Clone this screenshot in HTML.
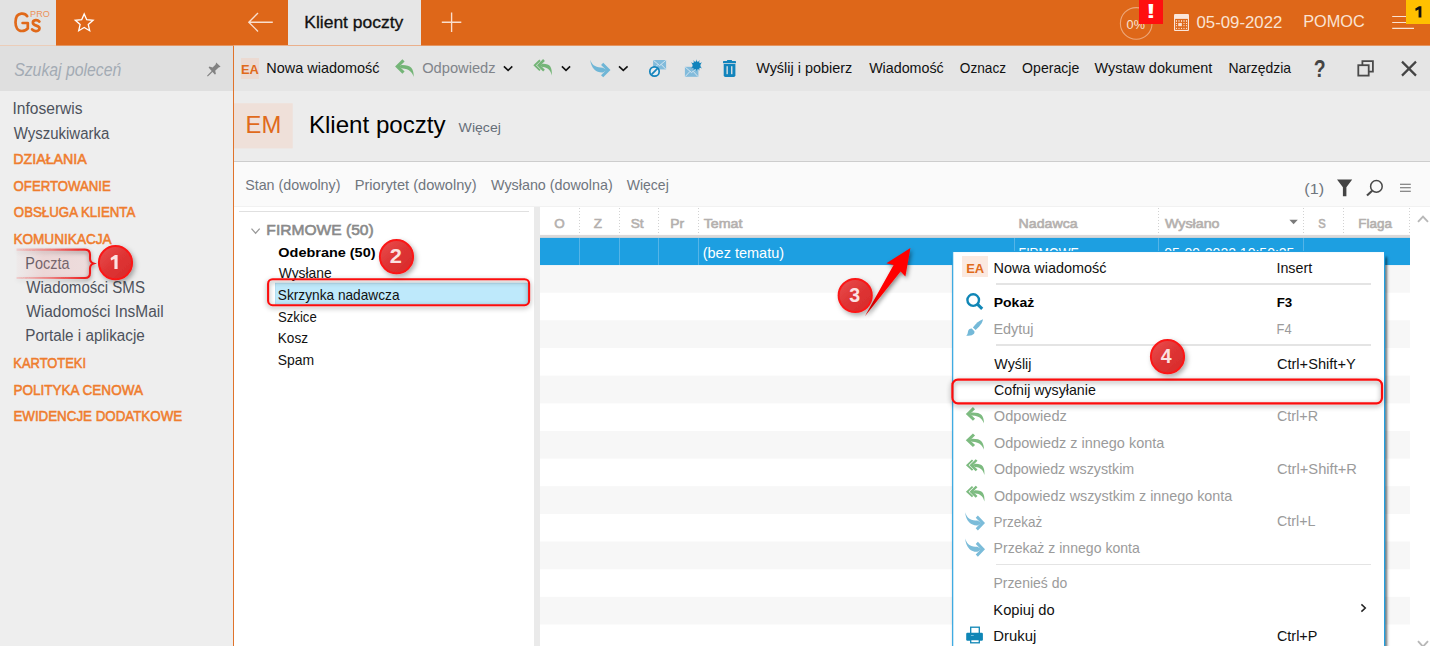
<!DOCTYPE html>
<html lang="pl">
<head>
<meta charset="utf-8">
<title>Klient poczty</title>
<style>
html,body{margin:0;padding:0;background:#fff;}
body{width:1430px;height:646px;overflow:hidden;position:relative;font-family:"Liberation Sans",sans-serif;}
#app{position:absolute;left:0;top:0;width:1430px;height:646px;overflow:hidden;background:#fff;}
.b{position:absolute;}
.t{position:absolute;white-space:nowrap;transform-origin:0 0;display:block;}
svg{position:absolute;left:0;top:0;overflow:visible;}
.row{position:absolute;left:540px;width:870px;background:#f7f7f7;}
</style>
</head>
<body>
<div id="app">

<!-- ============ top bar ============ -->
<div class="b" style="left:0;top:0;width:1430px;height:45px;background:#de6719;"></div>
<div class="b" style="left:0;top:45px;width:1430px;height:1px;background:#e39460;"></div>
<div class="b" style="left:0;top:0;width:56px;height:45px;background:#e2e2e2;"></div>
<div class="b" style="left:0;top:45px;width:56px;height:1px;background:#ebcdb9;"></div>
<div class="b" style="left:288px;top:0;width:133px;height:45px;background:#e6e6e6;"></div>
<div class="b" style="left:234px;top:45px;width:187px;height:1px;background:#eab08c;"></div>

<!-- ============ sidebar ============ -->
<div class="b" style="left:0;top:46px;width:233px;height:600px;background:#eeeeee;"></div>
<div class="b" style="left:0;top:46px;width:233px;height:45px;background:#dfdfdf;"></div>
<div class="b" style="left:233px;top:46px;width:1px;height:600px;background:#e0732b;"></div>

<!-- ============ toolbar ============ -->
<div class="b" style="left:234px;top:46px;width:1196px;height:45px;background:#e5e5e5;"></div>
<div class="b" style="left:241px;top:58px;width:18.2px;height:21px;background:#ebdad2;"></div>

<!-- ============ header ============ -->
<div class="b" style="left:234px;top:91px;width:1196px;height:70px;background:#ececec;"></div>
<div class="b" style="left:234px;top:161px;width:1196px;height:1px;background:#cdcdcd;"></div>
<svg width="1430" height="646" viewBox="0 0 1430 646"><rect x="234" y="103.2" width="58.7" height="45.2" fill="#efe0d9"/></svg>

<!-- ============ filter bar ============ -->
<div class="b" style="left:234px;top:162px;width:1196px;height:45px;background:#fafafa;"></div>
<div class="b" style="left:234px;top:206px;width:1196px;height:1px;background:#f1f1f1;"></div>

<!-- ============ tree panel ============ -->
<div class="b" style="left:239px;top:211px;width:290px;height:1px;background:#e0e0e0;"></div>
<div class="b" style="left:534px;top:207px;width:6px;height:439px;background:#eaeaea;"></div>
<svg width="1430" height="646" viewBox="0 0 1430 646"><rect x="275.4" y="283.2" width="252" height="21" fill="#bee9fb" stroke="#a9d8ee" stroke-width="0.8"/></svg>

<!-- ============ table ============ -->
<svg width="1430" height="646" viewBox="0 0 1430 646">
<rect x="540" y="265.00" width="870" height="27.75" fill="#f7f7f7"/>
<rect x="540" y="320.30" width="870" height="27.75" fill="#f7f7f7"/>
<rect x="540" y="375.60" width="870" height="27.75" fill="#f7f7f7"/>
<rect x="540" y="430.90" width="870" height="27.75" fill="#f7f7f7"/>
<rect x="540" y="486.20" width="870" height="27.75" fill="#f7f7f7"/>
<rect x="540" y="541.50" width="870" height="27.75" fill="#f7f7f7"/>
<rect x="540" y="596.80" width="870" height="27.75" fill="#f7f7f7"/>
<rect x="540" y="234.9" width="870" height="3.1" fill="#dbd9d9"/>
<rect x="540" y="237.9" width="870" height="27.15" fill="#1d9fe1"/>
</svg>
<div class="b" style="left:578.9px;top:208px;width:1px;height:27px;background:repeating-linear-gradient(to bottom,#d2d2d2 0,#d2d2d2 1px,transparent 1px,transparent 3px);"></div>
<div class="b" style="left:618.7px;top:208px;width:1px;height:27px;background:repeating-linear-gradient(to bottom,#d2d2d2 0,#d2d2d2 1px,transparent 1px,transparent 3px);"></div>
<div class="b" style="left:657.8px;top:208px;width:1px;height:27px;background:repeating-linear-gradient(to bottom,#d2d2d2 0,#d2d2d2 1px,transparent 1px,transparent 3px);"></div>
<div class="b" style="left:697.6px;top:208px;width:1px;height:27px;background:repeating-linear-gradient(to bottom,#d2d2d2 0,#d2d2d2 1px,transparent 1px,transparent 3px);"></div>
<div class="b" style="left:1157.8px;top:208px;width:1px;height:27px;background:repeating-linear-gradient(to bottom,#d2d2d2 0,#d2d2d2 1px,transparent 1px,transparent 3px);"></div>
<div class="b" style="left:1303.2px;top:208px;width:1px;height:27px;background:repeating-linear-gradient(to bottom,#d2d2d2 0,#d2d2d2 1px,transparent 1px,transparent 3px);"></div>
<div class="b" style="left:1343.0px;top:208px;width:1px;height:27px;background:repeating-linear-gradient(to bottom,#d2d2d2 0,#d2d2d2 1px,transparent 1px,transparent 3px);"></div>
<div class="b" style="left:1409.3px;top:208px;width:1px;height:27px;background:repeating-linear-gradient(to bottom,#d2d2d2 0,#d2d2d2 1px,transparent 1px,transparent 3px);"></div>

<div class="b" style="left:578.9px;top:238px;width:1px;height:26.7px;background:#55b4e7;"></div>
<div class="b" style="left:618.7px;top:238px;width:1px;height:26.7px;background:#55b4e7;"></div>
<div class="b" style="left:657.8px;top:238px;width:1px;height:26.7px;background:#55b4e7;"></div>
<div class="b" style="left:697.6px;top:238px;width:1px;height:26.7px;background:#55b4e7;"></div>
<div class="b" style="left:1157.8px;top:238px;width:1px;height:26.7px;background:#55b4e7;"></div>
<div class="b" style="left:1303.2px;top:238px;width:1px;height:26.7px;background:#55b4e7;"></div>
<div class="b" style="left:1014.0px;top:238px;width:1px;height:26.7px;background:#55b4e7;"></div>
<span class="t" style="left:304px;top:5.50px;font-size:16.8px;line-height:34px;color:#111;transform:translateX(0.29px) scaleX(1.0398);-webkit-text-stroke:0.3px;">Klient poczty</span>
<span class="t" style="left:1126px;top:13.00px;font-size:12px;line-height:24px;color:#fae3d3;transform:translateX(0.61px) scaleX(1.0548);">0%</span>
<span class="t" style="left:1196px;top:5.50px;font-size:16.5px;line-height:33px;color:#fae3d3;transform:translateX(0.45px) scaleX(1.0176);">05-09-2022</span>
<span class="t" style="left:1303px;top:4.50px;font-size:16.5px;line-height:33px;color:#fae3d3;transform:translateX(0.16px) scaleX(0.9896);">POMOC</span>
<span class="t" style="left:30px;top:6.50px;font-size:8.2px;line-height:16px;color:#ec9158;transform:translateX(0.09px) scaleX(1.1059);">PRO</span>
<span class="t" style="left:14px;top:52.50px;font-size:17.5px;line-height:35px;color:#a3abb4;transform:translateX(0.16px) scaleX(0.9030);font-style:italic;">Szukaj poleceń</span>
<span class="t" style="left:12px;top:93.00px;font-size:15.6px;line-height:31px;color:#4d525c;transform:translateX(0.48px) scaleX(0.9984);">Infoserwis</span>
<span class="t" style="left:13px;top:118.00px;font-size:15.6px;line-height:31px;color:#4d525c;transform:translateX(0.70px) scaleX(0.9614);">Wyszukiwarka</span>
<span class="t" style="left:13px;top:145.00px;font-size:14px;line-height:28px;color:#ee7d2e;transform:translateX(0.20px) scaleX(1.0169);-webkit-text-stroke:0.55px;">DZIAŁANIA</span>
<span class="t" style="left:13px;top:172.00px;font-size:14px;line-height:28px;color:#ee7d2e;transform:translateX(0.60px) scaleX(0.9416);-webkit-text-stroke:0.55px;">OFERTOWANIE</span>
<span class="t" style="left:13px;top:198.00px;font-size:14px;line-height:28px;color:#ee7d2e;transform:translateX(0.85px) scaleX(0.9478);-webkit-text-stroke:0.55px;">OBSŁUGA KLIENTA</span>
<span class="t" style="left:13px;top:225.00px;font-size:14px;line-height:28px;color:#ee7d2e;transform:translateX(0.38px) scaleX(0.9719);-webkit-text-stroke:0.55px;">KOMUNIKACJA</span>
<span class="t" style="left:25px;top:248.00px;font-size:15.6px;line-height:31px;color:#4d525c;transform:translateX(0.33px) scaleX(0.9248);">Poczta</span>
<span class="t" style="left:26px;top:272.00px;font-size:15.6px;line-height:31px;color:#4d525c;transform:translateX(0.23px) scaleX(0.9647);">Wiadomości SMS</span>
<span class="t" style="left:26px;top:296.00px;font-size:15.6px;line-height:31px;color:#4d525c;transform:translateX(0.23px) scaleX(0.9908);">Wiadomości InsMail</span>
<span class="t" style="left:25px;top:320.00px;font-size:15.6px;line-height:31px;color:#4d525c;transform:translateX(0.28px) scaleX(0.9780);">Portale i aplikacje</span>
<span class="t" style="left:13px;top:349.00px;font-size:14px;line-height:28px;color:#ee7d2e;transform:translateX(0.35px) scaleX(0.9224);-webkit-text-stroke:0.55px;">KARTOTEKI</span>
<span class="t" style="left:13px;top:376.00px;font-size:14px;line-height:28px;color:#ee7d2e;transform:translateX(0.38px) scaleX(0.9664);-webkit-text-stroke:0.55px;">POLITYKA CENOWA</span>
<span class="t" style="left:13px;top:402.00px;font-size:14px;line-height:28px;color:#ee7d2e;transform:translateX(0.40px) scaleX(0.9528);-webkit-text-stroke:0.55px;">EWIDENCJE DODATKOWE</span>
<span class="t" style="left:240px;top:56.50px;font-size:13px;line-height:26px;color:#e06a1b;transform:translateX(0.95px) scaleX(0.9907);font-weight:700;">EA</span>
<span class="t" style="left:266px;top:54.00px;font-size:14.2px;line-height:28px;color:#111;transform:translateX(0.35px) scaleX(1.0180);">Nowa wiadomość</span>
<span class="t" style="left:422px;top:54.00px;font-size:14.2px;line-height:28px;color:#80848a;transform:translateX(0.18px) scaleX(1.0345);">Odpowiedz</span>
<span class="t" style="left:756px;top:54.00px;font-size:14.2px;line-height:28px;color:#111;transform:translateX(0.13px) scaleX(1.0179);">Wyślij i pobierz</span>
<span class="t" style="left:869px;top:54.00px;font-size:14.2px;line-height:28px;color:#111;transform:translateX(0.13px) scaleX(1.0068);">Wiadomość</span>
<span class="t" style="left:959px;top:54.00px;font-size:14.2px;line-height:28px;color:#111;transform:translateX(0.85px) scaleX(0.9614);">Oznacz</span>
<span class="t" style="left:1022px;top:54.00px;font-size:14.2px;line-height:28px;color:#111;transform:translateX(0.12px) scaleX(0.9921);">Operacje</span>
<span class="t" style="left:1094px;top:54.00px;font-size:14.2px;line-height:28px;color:#111;transform:translateX(0.51px) scaleX(1.0166);">Wystaw dokument</span>
<span class="t" style="left:1228px;top:54.00px;font-size:14.2px;line-height:28px;color:#111;transform:translateX(0.41px) scaleX(0.9814);">Narzędzia</span>
<span class="t" style="left:1313px;top:46.00px;font-size:23px;line-height:46px;color:#444;transform:translateX(0.80px) scaleX(0.8446);font-weight:700;">?</span>
<span class="t" style="left:245px;top:102.00px;font-size:23.0px;line-height:46px;color:#e06a1b;transform:translateX(0.52px) scaleX(1.0352);">EM</span>
<span class="t" style="left:308px;top:101.50px;font-size:23.6px;line-height:47px;color:#000;transform:translateX(0.90px) scaleX(1.0222);">Klient poczty</span>
<span class="t" style="left:458px;top:114.00px;font-size:13.7px;line-height:27px;color:#666e78;transform:translateX(0.59px) scaleX(1.0293);">Więcej</span>
<span class="t" style="left:245px;top:171.00px;font-size:14.2px;line-height:28px;color:#70767e;transform:translateX(0.14px) scaleX(1.0070);">Stan (dowolny)</span>
<span class="t" style="left:354px;top:171.00px;font-size:14.2px;line-height:28px;color:#70767e;transform:translateX(0.67px) scaleX(1.0302);">Priorytet (dowolny)</span>
<span class="t" style="left:491px;top:171.00px;font-size:14.2px;line-height:28px;color:#70767e;transform:translateX(0.02px) scaleX(1.0099);">Wysłano (dowolna)</span>
<span class="t" style="left:626px;top:171.00px;font-size:14.2px;line-height:28px;color:#70767e;transform:translateX(0.76px) scaleX(0.9867);">Więcej</span>
<span class="t" style="left:1304px;top:173.00px;font-size:15.5px;line-height:31px;color:#70767e;transform:translateX(0.22px) scaleX(1.0473);">(1)</span>
<span class="t" style="left:266px;top:214.50px;font-size:15.1px;line-height:30px;color:#8a8a8a;transform:translateX(0.37px) scaleX(1.0324);-webkit-text-stroke:0.6px;">FIRMOWE (50)</span>
<span class="t" style="left:278px;top:239.50px;font-size:13.2px;line-height:26px;color:#000;transform:translateX(0.31px) scaleX(1.0962);font-weight:700;">Odebrane (50)</span>
<span class="t" style="left:278px;top:259.00px;font-size:14.2px;line-height:28px;color:#111;transform:translateX(0.68px) scaleX(0.9781);">Wysłane</span>
<span class="t" style="left:277px;top:281.00px;font-size:14.2px;line-height:28px;color:#111;transform:translateX(0.83px) scaleX(0.9644);">Skrzynka nadawcza</span>
<span class="t" style="left:277px;top:303.00px;font-size:14.2px;line-height:28px;color:#111;transform:translateX(0.98px) scaleX(0.9264);">Szkice</span>
<span class="t" style="left:277px;top:324.00px;font-size:14.2px;line-height:28px;color:#111;transform:translateX(0.72px) scaleX(0.9605);">Kosz</span>
<span class="t" style="left:277px;top:346.00px;font-size:14.2px;line-height:28px;color:#111;transform:translateX(0.80px) scaleX(0.9813);">Spam</span>
<span class="t" style="left:554px;top:210.50px;font-size:13.2px;line-height:26px;color:#b4b0ae;transform:translateX(0.24px) scaleX(1.0216);-webkit-text-stroke:0.6px;">O</span>
<span class="t" style="left:593px;top:210.50px;font-size:13.2px;line-height:26px;color:#b4b0ae;transform:translateX(0.70px) scaleX(1.0237);-webkit-text-stroke:0.6px;">Z</span>
<span class="t" style="left:630px;top:210.50px;font-size:13.2px;line-height:26px;color:#b4b0ae;transform:translateX(0.66px) scaleX(1.0346);-webkit-text-stroke:0.6px;">St</span>
<span class="t" style="left:670px;top:210.50px;font-size:13.2px;line-height:26px;color:#b4b0ae;transform:translateX(0.28px) scaleX(1.0467);-webkit-text-stroke:0.6px;">Pr</span>
<span class="t" style="left:703px;top:210.50px;font-size:13.2px;line-height:26px;color:#b4b0ae;transform:translateX(0.63px) scaleX(1.0787);-webkit-text-stroke:0.6px;">Temat</span>
<span class="t" style="left:1018px;top:210.50px;font-size:13.2px;line-height:26px;color:#b4b0ae;transform:translateX(0.62px) scaleX(1.0735);-webkit-text-stroke:0.6px;">Nadawca</span>
<span class="t" style="left:1164px;top:210.50px;font-size:13.2px;line-height:26px;color:#b4b0ae;transform:translateX(0.92px) scaleX(1.0827);-webkit-text-stroke:0.6px;">Wysłano</span>
<span class="t" style="left:1318px;top:210.50px;font-size:13.2px;line-height:26px;color:#b4b0ae;transform:translateX(0.34px) scaleX(0.8506);-webkit-text-stroke:0.6px;">S</span>
<span class="t" style="left:1358px;top:210.50px;font-size:13.2px;line-height:26px;color:#b4b0ae;transform:translateX(0.34px) scaleX(1.0182);-webkit-text-stroke:0.6px;">Flaga</span>
<span class="t" style="left:702px;top:239.00px;font-size:14.2px;line-height:28px;color:#fff;transform:translateX(0.72px) scaleX(1.0215);">(bez tematu)</span>
<span class="t" style="left:1018px;top:239.00px;font-size:14.2px;line-height:28px;color:#fff;transform:translateX(0.56px) scaleX(0.8775);">FIRMOWE</span>
<span class="t" style="left:1164px;top:239.00px;font-size:14.2px;line-height:28px;color:#fff;transform:translateX(0.30px) scaleX(0.9875);">05-09-2022 10:50:25</span>

<svg width="1430" height="646" viewBox="0 0 1430 646">
<!-- logo Gs -->
<g fill="none" stroke="#e0691a" stroke-width="2.7" stroke-linecap="round" stroke-linejoin="round">
<path d="M27.2,16.2 C25.6,13.9 22.9,13.4 21.2,13.6 C17.3,14 15.5,17.6 15.5,22.3 C15.5,27.2 17.6,31 21.8,31 C24.6,31 26.6,30 27.8,28.4 L27.8,23 L22.6,23"/>
<path d="M39.4,21.6 C38.2,20.2 36.6,20.1 35.6,20.2 C33.7,20.4 32.8,21.6 32.9,22.9 C33.1,26.3 39.6,25 39.5,28.4 C39.4,30.6 37.2,31.2 35.6,31.1 C34,31 32.9,30.4 32.1,29.4"/>
</g>
<!-- star -->
<path d="M84.20,13.90 L86.73,19.72 L93.04,20.33 L88.29,24.53 L89.67,30.72 L84.20,27.50 L78.73,30.72 L80.11,24.53 L75.36,20.33 L81.67,19.72 Z" fill="none" stroke="#fff" stroke-width="1.35" stroke-linejoin="miter"/>
<!-- back arrow -->
<g fill="none" stroke="#f9dfce" stroke-width="1.35">
<path d="M248.6,22.2 L272.8,22.2 M258,13 L248.8,22.2 L258,31.4"/>
<!-- plus -->
<path d="M441.8,22.2 L461.3,22.2 M451.6,12.6 L451.6,31.9"/>
</g>
<!-- progress circle -->
<circle cx="1136.2" cy="23.4" r="15.8" fill="none" stroke="#eca77a" stroke-width="1.1"/>
<!-- calendar -->
<g>
<rect x="1174" y="14.1" width="15" height="16.9" rx="1.1" fill="#fbe6da"/>
<rect x="1175.1" y="18.9" width="12.8" height="11" fill="#de6719"/>
<g fill="#fbe6da">
<rect x="1175.95" y="20.20" width="1.1" height="1.6"/>
<rect x="1178.45" y="20.20" width="1.1" height="1.6"/>
<rect x="1180.95" y="20.20" width="1.1" height="1.6"/>
<rect x="1183.45" y="20.20" width="1.1" height="1.6"/>
<rect x="1185.95" y="20.20" width="1.1" height="1.6"/>
<rect x="1175.95" y="22.95" width="1.1" height="1.1"/>
<rect x="1183.45" y="22.95" width="1.1" height="1.1"/>
<rect x="1185.95" y="22.95" width="1.1" height="1.1"/>
<rect x="1175.95" y="25.15" width="1.1" height="1.1"/>
<rect x="1183.45" y="25.15" width="1.1" height="1.1"/>
<rect x="1185.95" y="25.15" width="1.1" height="1.1"/>
<rect x="1175.95" y="27.85" width="1.1" height="1.1"/>
<rect x="1178.45" y="27.85" width="1.1" height="1.1"/>
<rect x="1180.95" y="27.85" width="1.1" height="1.1"/>
<rect x="1183.45" y="27.85" width="1.1" height="1.1"/>
<rect x="1185.95" y="27.85" width="1.1" height="1.1"/>
<rect x="1178.2" y="22.9" width="3.7" height="3.3" opacity="0.92"/>
</g>
</g>
<!-- hamburger -->
<path d="M1392.2,16.5 H1414 M1392.2,22.5 H1414 M1392.2,28.4 H1414" stroke="#fae3d3" stroke-width="1.2" fill="none"/>
<!-- pin -->
<g fill="#828282" stroke="none">
<path d="M216.2,62.6 L220.6,66.8 L218.6,67.4 L215.2,70.8 L215.9,74 L214.8,74.6 L208.6,67.6 L209.4,66.6 L212.6,67.6 L215.6,64.6 Z"/>
<path d="M207,75.8 L212.4,70.2 L213.3,71.2 L207.8,76.4 Z"/>
</g>

<!-- toolbar: reply -->
<g id="reply">
<path d="M403.5,60.3 L397.3,66.5 L403.5,72.7" fill="none" stroke="#74b577" stroke-width="3.1" stroke-linejoin="miter"/>
<path d="M398,66.5 L401.5,64.9 C406,64.8 409.5,65.5 411.3,67.8 C413.1,70 413.8,73 413.7,76.9 C413,74.5 411.8,72.7 410.4,71.4 C408.6,69.8 406,68.6 401.5,68.3 Z" fill="#74b577"/>
</g>
<!-- toolbar: reply all -->
<g id="replyall">
<path d="M540,60.2 L534.7,65.3 L540,70.4" fill="none" stroke="#74b577" stroke-width="1.9"/>
<path d="M544,60 L538.7,65.3 L544,70.6" fill="none" stroke="#74b577" stroke-width="2.5"/>
<path d="M539.5,65.3 L542.5,63.8 C546.5,63.7 549,64.6 550.3,66.6 C551.6,68.6 552,71.5 551.8,75.4 C551.2,73 550.4,71.2 549.2,70 C547.6,68.3 545.6,67.3 542.5,67.1 Z" fill="#74b577"/>
</g>
<!-- toolbar: forward -->
<g id="fwd" transform="translate(590,59.7) scale(1.02,1.0)">
<path d="M11.9,4.2 L18,10.3 L11.9,16.6" fill="none" stroke="#6fb6d6" stroke-width="3"/>
<path d="M0.3,0 C1.2,3 3,5.6 5,6.4 C7,7.5 9.5,8 12.5,8 L17,10.3 L12.5,12.7 C9,12.8 6.5,12 4.5,10 C2,7.5 0.5,4 0.3,0 Z" fill="#6fb6d6"/>
</g>
<!-- chevrons -->
<g fill="none" stroke="#111" stroke-width="1.6">
<path d="M503.9,66.4 L508.1,70.4 L512.3,66.4"/>
<path d="M561.9,66.4 L566,70.4 L570.1,66.4"/>
<path d="M619,66.4 L623.3,70.4 L627.6,66.4"/>
</g>
<!-- envelope + no sign -->
<g>
<rect x="653.1" y="60" width="13" height="9.4" fill="#82bbdb"/>
<path d="M653.4,60.3 L659.6,65.6 L665.8,60.3 M653.4,69.2 L658,64.4 M665.8,69.2 L661.2,64.4" fill="none" stroke="#dbeaf3" stroke-width="0.9"/>
<circle cx="654.5" cy="71.5" r="4.7" fill="#e8eef2" stroke="#1284bc" stroke-width="1.7"/>
<path d="M651.4,74.6 L657.6,68.4" stroke="#1284bc" stroke-width="1.7"/>
</g>
<!-- envelope + star -->
<g>
<rect x="684.9" y="66.8" width="13.5" height="10" fill="#82bbdb"/>
<path d="M685.2,67.1 L691.6,72.6 L698,67.1 M685.2,76.6 L690,71.4 M698,76.6 L693.2,71.4" fill="none" stroke="#dbeaf3" stroke-width="0.9"/>
<circle cx="696.5" cy="65.4" r="3.9" fill="#1284bc"/>
<path d="M696.5,59.2 L697.3,63 L699.6,60 L698.8,63.8 L701.9,62.3 L699.9,65.4 L701.9,68.5 L698.8,67 L699.6,70.8 L697.3,67.8 L696.5,71.6 L695.7,67.8 L693.4,70.8 L694.2,67 L691.1,68.5 L693.1,65.4 L691.1,62.3 L694.2,63.8 L693.4,60 L695.7,63 Z" fill="#1284bc"/>
</g>
<!-- trash -->
<g fill="#1284bc">
<rect x="727" y="59.9" width="5" height="1.6" rx="0.5"/>
<rect x="723" y="61" width="13" height="2.3" rx="0.6"/>
<path d="M723.7,64 H735.4 V75.2 Q735.4,76.9 733.7,76.9 H725.4 Q723.7,76.9 723.7,75.2 Z"/>
<rect x="726.5" y="66.2" width="1.3" height="8" fill="#e5e5e5"/>
<rect x="731.1" y="66.2" width="1.3" height="8" fill="#e5e5e5"/>
</g>
<!-- restore -->
<g fill="none" stroke="#4a4a4a" stroke-width="1.8">
<path d="M1362.4,65 V61.2 H1372.9 V71.6 H1369"/>
<rect x="1358.3" y="65.2" width="10.4" height="10.4"/>
</g>
<!-- close -->
<path d="M1402,61.6 L1416,75.6 M1416,61.6 L1402,75.6" stroke="#444" stroke-width="2.2" fill="none"/>

<!-- filter bar icons -->
<path d="M1337,179.6 H1352.2 L1346.4,187.2 V196.2 H1342.9 V187.2 Z" fill="#444"/>
<g fill="none" stroke="#484848" stroke-width="1.5">
<circle cx="1376.4" cy="186.4" r="5.8"/>
<path d="M1372.2,190.7 L1367,195.5" stroke-width="2.1"/>
</g>
<path d="M1400,184.2 H1410.8 M1400,187.7 H1410.8 M1400,191.2 H1410.8" stroke="#666" stroke-width="1.15" fill="none"/>

<!-- tree chevron -->
<path d="M251.5,228.6 L255.6,233.2 L259.7,228.6" fill="none" stroke="#9a9a9a" stroke-width="1.3"/>
<!-- sort triangle -->
<path d="M1289.4,219.8 H1297.8 L1293.6,224.3 Z" fill="#7a7a7a"/>
<!-- scroll carets -->
<path d="M1418,221.8 L1423,216.6 L1428,221.8" fill="none" stroke="#b8b8b8" stroke-width="1.9"/>
<path d="M1418,641.2 L1423,646.6 L1428,641.2" fill="none" stroke="#b8b8b8" stroke-width="1.9"/>
</svg>

<div class="b" style="left:1406px;top:0;width:24px;height:23.5px;background:#ffc000;"></div>
<div class="b" style="left:1139px;top:0;width:24px;height:24px;background:#ff0f0f;"></div>

<!-- ============ context menu ============ -->
<svg width="1430" height="646" viewBox="0 0 1430 646">
<defs><filter id="msh" x="-5%" y="-5%" width="110%" height="110%"><feDropShadow dx="1.6" dy="6" stdDeviation="1.5" flood-color="#000" flood-opacity="0.7"/></filter></defs>
<rect x="952.7" y="251.5" width="431.85" height="420" fill="#fff" stroke="#219fe0" stroke-width="1.1" filter="url(#msh)"/>
</svg>
<div class="b" style="left:961.7px;top:256.3px;width:26.4px;height:20.7px;background:#fbe9e0;"></div>
<div class="b" style="left:996.3px;top:283.2px;width:374.7px;height:1.5px;background:#e4e4e4;"></div>
<div class="b" style="left:996.3px;top:344.4px;width:374.7px;height:1.5px;background:#e4e4e4;"></div>
<div class="b" style="left:996.3px;top:563.8px;width:374.7px;height:1.5px;background:#e4e4e4;"></div>

<span class="t" style="left:1145px;top:-9.00px;font-size:20px;line-height:40px;color:#fff;transform:translateX(0.68px) scaleX(1.5497);font-weight:700;">!</span>
<span class="t" style="left:966px;top:255.50px;font-size:13px;line-height:26px;color:#e06a1b;transform:translateX(0.19px) scaleX(0.9966);font-weight:700;">EA</span>
<span class="t" style="left:993px;top:254.00px;font-size:14.2px;line-height:28px;color:#111;transform:translateX(0.48px) scaleX(1.0158);">Nowa wiadomość</span>
<span class="t" style="left:1276px;top:254.00px;font-size:14.2px;line-height:28px;color:#111;transform:translateX(0.42px) scaleX(1.0065);">Insert</span>
<span class="t" style="left:993px;top:289.00px;font-size:13.4px;line-height:27px;color:#000;transform:translateX(0.76px) scaleX(1.0431);font-weight:700;">Pokaż</span>
<span class="t" style="left:1276px;top:289.00px;font-size:13.4px;line-height:27px;color:#000;transform:translateX(0.70px) scaleX(0.9941);font-weight:700;">F3</span>
<span class="t" style="left:993px;top:315.00px;font-size:14.2px;line-height:28px;color:#9b9b9b;transform:translateX(0.50px) scaleX(1.0156);">Edytuj</span>
<span class="t" style="left:1276px;top:315.00px;font-size:14.2px;line-height:28px;color:#9b9b9b;transform:translateX(0.62px) scaleX(0.9116);">F4</span>
<span class="t" style="left:994px;top:350.00px;font-size:14.2px;line-height:28px;color:#111;transform:translateX(0.34px) scaleX(1.0039);">Wyślij</span>
<span class="t" style="left:1276px;top:350.00px;font-size:14.2px;line-height:28px;color:#111;transform:translateX(0.88px) scaleX(1.0307);">Ctrl+Shift+Y</span>
<span class="t" style="left:993px;top:376.00px;font-size:14.2px;line-height:28px;color:#111;transform:translateX(1.00px) scaleX(1.0011);">Cofnij wysyłanie</span>
<span class="t" style="left:993px;top:402.00px;font-size:14.2px;line-height:28px;color:#9b9b9b;transform:translateX(0.87px) scaleX(1.0287);">Odpowiedz</span>
<span class="t" style="left:1276px;top:402.00px;font-size:14.2px;line-height:28px;color:#9b9b9b;transform:translateX(0.95px) scaleX(1.0113);">Ctrl+R</span>
<span class="t" style="left:993px;top:429.00px;font-size:14.2px;line-height:28px;color:#9b9b9b;transform:translateX(0.88px) scaleX(1.0190);">Odpowiedz z innego konta</span>
<span class="t" style="left:993px;top:455.00px;font-size:14.2px;line-height:28px;color:#9b9b9b;transform:translateX(0.89px) scaleX(1.0053);">Odpowiedz wszystkim</span>
<span class="t" style="left:1276px;top:455.00px;font-size:14.2px;line-height:28px;color:#9b9b9b;transform:translateX(0.88px) scaleX(1.0366);">Ctrl+Shift+R</span>
<span class="t" style="left:993px;top:482.00px;font-size:14.2px;line-height:28px;color:#9b9b9b;transform:translateX(0.89px) scaleX(1.0111);">Odpowiedz wszystkim z innego konta</span>
<span class="t" style="left:993px;top:508.00px;font-size:14.2px;line-height:28px;color:#9b9b9b;transform:translateX(0.62px) scaleX(0.9469);">Przekaż</span>
<span class="t" style="left:1276px;top:507.00px;font-size:14.2px;line-height:28px;color:#9b9b9b;transform:translateX(0.95px) scaleX(1.0084);">Ctrl+L</span>
<span class="t" style="left:993px;top:534.00px;font-size:14.2px;line-height:28px;color:#9b9b9b;transform:translateX(0.60px) scaleX(0.9912);">Przekaż z innego konta</span>
<span class="t" style="left:993px;top:569.00px;font-size:14.2px;line-height:28px;color:#9b9b9b;transform:translateX(0.43px) scaleX(0.9841);">Przenieś do</span>
<span class="t" style="left:993px;top:596.00px;font-size:14.2px;line-height:28px;color:#111;transform:translateX(0.33px) scaleX(1.0364);">Kopiuj do</span>
<span class="t" style="left:993px;top:622.00px;font-size:14.2px;line-height:28px;color:#111;transform:translateX(0.32px) scaleX(1.0494);">Drukuj</span>
<span class="t" style="left:1276px;top:622.00px;font-size:14.2px;line-height:28px;color:#111;transform:translateX(0.94px) scaleX(1.0149);">Ctrl+P</span>

<svg width="1430" height="646" viewBox="0 0 1430 646">
<defs>
<g id="mreply">
<path d="M8.5,1.2 L2.3,7.4 L8.5,13.6" fill="none" stroke="#7dbb80" stroke-width="3.1"/>
<path d="M3,7.4 L6.5,5.8 C11,5.7 14.5,6.4 16.3,8.7 C18.1,10.9 18.8,13.9 18.7,17.8 C18,15.4 16.8,13.6 15.4,12.3 C13.6,10.7 11,9.5 6.5,9.2 Z" fill="#7dbb80"/>
</g>
<g id="mreplyall">
<path d="M7,0.6 L1.7,5.7 L7,10.8" fill="none" stroke="#7dbb80" stroke-width="1.9"/>
<path d="M11,0.4 L5.7,5.7 L11,11" fill="none" stroke="#7dbb80" stroke-width="2.5"/>
<path d="M6.5,5.7 L9.5,4.2 C13.5,4.1 16,5 17.3,7 C18.6,9 19,11.9 18.8,15.8 C18.2,13.4 17.4,11.6 16.2,10.4 C14.6,8.7 12.6,7.7 9.5,7.5 Z" fill="#7dbb80"/>
</g>
<g id="mfwd">
<path d="M11.9,4.2 L18,10.3 L11.9,16.6" fill="none" stroke="#7bbcd9" stroke-width="3"/>
<path d="M0.3,0 C1.2,3 3,5.6 5,6.4 C7,7.5 9.5,8 12.5,8 L17,10.3 L12.5,12.7 C9,12.8 6.5,12 4.5,10 C2,7.5 0.5,4 0.3,0 Z" fill="#7bbcd9"/>
</g>
</defs>
<!-- magnifier -->
<g fill="none" stroke="#0f86b6">
<circle cx="973.2" cy="300.1" r="5.8" stroke-width="2.4"/>
<path d="M977.6,304.4 L982.2,308.9" stroke-width="3"/>
</g>
<!-- brush -->
<g fill="#74b9d8">
<path d="M983,319.2 C982.6,322.8 979.2,327 975.6,330 L972.9,327.4 C975.6,323.6 979.4,320.4 983,319.2 Z"/>
<path d="M971.8,328.6 L974.4,331.2 C975,334 972.6,335.8 966.2,335.8 C968.2,334.2 967.6,332.6 968.2,330.8 C968.8,329.2 970.4,328.4 971.8,328.6 Z"/>
</g>
<!-- reply icons -->
<use href="#mreply" transform="translate(965.7,407.0) scale(0.975,0.93)"/>
<use href="#mreply" transform="translate(965.7,433.3) scale(0.975,0.93)"/>
<use href="#mreplyall" transform="translate(965.6,459.6) scale(1.0,0.98)"/>
<use href="#mreplyall" transform="translate(965.6,486.1) scale(1.0,0.98)"/>
<use href="#mfwd" transform="translate(964.9,512.3) scale(1.0,1.03)"/>
<use href="#mfwd" transform="translate(964.9,538.6) scale(1.0,1.03)"/>
<!-- submenu arrow -->
<path d="M1361.4,604.4 L1365.3,608 L1361.4,611.6" fill="none" stroke="#222" stroke-width="1.5"/>
<!-- printer -->
<g>
<rect x="970.7" y="627.2" width="8.6" height="7" fill="#fff" stroke="#0f86b6" stroke-width="1.3"/>
<rect x="966.2" y="632.8" width="16.7" height="7.9" rx="1.2" fill="#0f86b6"/>
<rect x="970.7" y="639.6" width="8.6" height="3.2" fill="#fff" stroke="#0f86b6" stroke-width="1.3"/>
<rect x="970.9" y="635.1" width="2.8" height="0.9" fill="#7cc3e2"/>
</g>
</svg>


<!-- ============ annotations ============ -->
<svg width="1430" height="646" viewBox="0 0 1430 646">
<defs>
<filter id="sh" x="-30%" y="-30%" width="170%" height="170%"><feDropShadow dx="1.5" dy="2" stdDeviation="2" flood-color="#000" flood-opacity="0.45"/></filter>
<filter id="sh2" x="-10%" y="-40%" width="120%" height="200%"><feDropShadow dx="0" dy="2" stdDeviation="2.2" flood-color="#000" flood-opacity="0.45"/></filter>
<linearGradient id="pfade" x1="0" x2="1" y1="0" y2="0"><stop offset="0" stop-color="#e8a0a0" stop-opacity="0.05"/><stop offset="0.35" stop-color="#e89a9a" stop-opacity="0.28"/><stop offset="1" stop-color="#e8a0a0" stop-opacity="0.22"/></linearGradient>
<linearGradient id="pstroke" x1="0" x2="1" y1="0" y2="0"><stop offset="0" stop-color="#f01818" stop-opacity="0.12"/><stop offset="0.45" stop-color="#f01818" stop-opacity="0.45"/><stop offset="0.8" stop-color="#f01818" stop-opacity="0.85"/><stop offset="0.95" stop-color="#f01818" stop-opacity="1"/></linearGradient>
<filter id="shb" x="-40%" y="-40%" width="190%" height="190%"><feDropShadow dx="2" dy="2.5" stdDeviation="2.6" flood-color="#000" flood-opacity="0.33"/></filter>
<linearGradient id="bg" x1="0.15" y1="0.1" x2="0.85" y2="0.9"><stop offset="0" stop-color="#e74a4a"/><stop offset="0.5" stop-color="#de3434"/><stop offset="1" stop-color="#d82c2c"/></linearGradient>
<filter id="sh3" x="-5%" y="-60%" width="110%" height="240%"><feDropShadow dx="0" dy="1.8" stdDeviation="2.6" flood-color="#000" flood-opacity="0.42"/></filter>
</defs>
<!-- Poczta callout -->
<path d="M16.5,249.6 H85 Q90,249.6 90,254.6 V258.6 Q90,262.4 93.6,263.6 Q90,264.8 90,268.6 V273 Q90,278 85,278 H16.5 Z" fill="url(#pfade)" stroke="none"/>
<path d="M16.5,249.6 H85 Q90,249.6 90,254.6 V258.6 Q90,262.4 93.6,263.6 Q90,264.8 90,268.6 V273 Q90,278 85,278 H16.5" fill="none" stroke="url(#pstroke)" stroke-width="2.1" filter="url(#sh2)"/>
<!-- Skrzynka nadawcza rect -->
<rect x="268.1" y="279.2" width="261" height="26" rx="4.5" fill="none" stroke="#fb0d0d" stroke-width="2.1" filter="url(#sh3)"/>
<!-- Cofnij wysylanie rect -->
<rect x="952.4" y="379.7" width="429.6" height="23.6" rx="5.5" fill="none" stroke="#fb0d0d" stroke-width="2.2" filter="url(#sh3)"/>
<!-- arrow -->
<path d="M910.4,248.1 L886.4,263.3 L893.6,265 L864.9,316.2 L900.6,271.6 L905.4,276.5 Z" fill="#ff0000" filter="url(#sh)"/>
<!-- badges -->
<g filter="url(#shb)">
<circle cx="115.5" cy="262.7" r="16.6" fill="url(#bg)" stroke="#fb1818" stroke-width="2"/>
<circle cx="396.5" cy="256.7" r="16.6" fill="url(#bg)" stroke="#fb1818" stroke-width="2"/>
<circle cx="855.2" cy="295.5" r="16.6" fill="url(#bg)" stroke="#fb1818" stroke-width="2"/>
<circle cx="1167.5" cy="356.7" r="16.6" fill="url(#bg)" stroke="#fb1818" stroke-width="2"/>
</g>
<path d="M115.0,254.9 L117.6,254.9 L117.6,269 L114.4,269 L114.4,258.9 L111.0,260.6 L110.6,257.9 Z" fill="#fbe2e2"/>
<path d="M1419.1,6.2 L1421.4,6.2 L1421.4,17.6 L1418.6,17.6 L1418.6,9.5 L1415.7,10.9 L1415.3,8.6 Z" fill="#111"/>
</svg>


<span class="t" style="left:389px;top:236.00px;font-size:20px;line-height:40px;color:#fbe2e2;transform:translateX(0.81px) scaleX(1.0869);font-weight:700;">2</span>
<span class="t" style="left:849px;top:275.00px;font-size:20px;line-height:40px;color:#fbe2e2;transform:translateX(0.29px) scaleX(0.9794);font-weight:700;">3</span>
<span class="t" style="left:1160px;top:336.00px;font-size:20px;line-height:40px;color:#fbe2e2;transform:translateX(0.77px) scaleX(0.9770);font-weight:700;">4</span>

</div>
</body>
</html>
